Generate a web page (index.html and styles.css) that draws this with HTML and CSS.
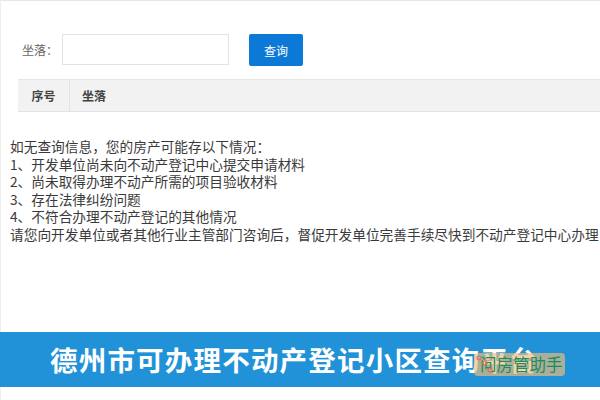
FILE: index.html
```html
<!DOCTYPE html>
<html lang="zh">
<head>
<meta charset="utf-8">
<title>德州市可办理不动产登记小区查询平台</title>
<link rel="stylesheet" href="styles.css">
</head>
<body>
<div class="page">
  <main class="content">
    <form class="search">
      <label class="search-label">坐落：</label>
      <span class="search-input"></span>
      <span class="search-btn">查询</span>
    </form>
    <div class="table-head">
      <div class="col col-no">序号</div>
      <div class="col col-addr">坐落</div>
    </div>
    <div class="notice">
      <p>如无查询信息，您的房产可能存以下情况：</p>
      <p>1、开发单位尚未向不动产登记中心提交申请材料</p>
      <p>2、尚未取得办理不动产所需的项目验收材料</p>
      <p>3、存在法律纠纷问题</p>
      <p>4、不符合办理不动产登记的其他情况</p>
      <p>请您向开发单位或者其他行业主管部门咨询后，督促开发单位完善手续尽快到不动产登记中心办理</p>
    </div>
  </main>
  <footer class="banner">
    <h1 class="banner-title">德州市可办理不动产登记小区查询平台</h1>
    <div class="watermark">
      <span class="wm-text">问房管助手</span>
      <svg class="wm-icon" width="22" height="22" viewBox="0 0 22 22" aria-hidden="true">
        <circle cx="5" cy="5" r="2"/>
        <circle cx="11" cy="10" r="2"/>
        <circle cx="16" cy="17" r="2"/>
      </svg>
    </div>
  </footer>
</div>
</body>
</html>
```
FILE: styles.css
```css
* { box-sizing: border-box; }
html, body { margin: 0; padding: 0; }
body {
  width: 600px;
  height: 400px;
  overflow: hidden;
  background: #fff;
  font-family: "Noto Sans CJK SC", "Liberation Sans", sans-serif;
}
p { margin: 0; }
.page {
  height: 400px;
  border-top: 1px solid #e6e6e6;
  border-left: 1px solid #eeeeee;
  display: flex;
  flex-direction: column;
}
.content { height: 331px; }
.search {
  display: flex;
  align-items: flex-start;
  height: 32px;
  margin-top: 33px;
  padding-left: 21px;
}
.search-label {
  width: 40px;
  font-size: 12px;
  line-height: 31px;
  color: #666;
}
.search-input {
  width: 167px;
  height: 31px;
  border: 1px solid #e3e3e3;
  background: #fff;
}
.search-btn {
  width: 54px;
  height: 32px;
  margin-left: 20px;
  background: #0c79d6;
  border-radius: 2px;
  color: #fff;
  font-size: 12px;
  display: flex;
  align-items: center;
  justify-content: center;
}
.table-head {
  display: flex;
  height: 33px;
  margin: 13px 0 0 17px;
  background: #f2f2f2;
  border-top: 1px solid #e6e6e6;
  border-bottom: 1px solid #e2e2e2;
  font-size: 12px;
  font-weight: 700;
  color: #444;
}
.col { display: flex; align-items: center; }
.col-no {
  width: 52px;
  justify-content: center;
  border-right: 1px solid #e2e2e2;
}
.col-addr { padding-left: 12px; }
.notice {
  margin-top: 26px;
  padding-left: 9px;
  font-size: 13.7px;
  line-height: 17.6px;
  color: #3a3a3a;
  white-space: nowrap;
}
.banner {
  position: relative;
  height: 55px;
  margin-left: -1px;
  background: #2192d8;
  display: flex;
  align-items: center;
}
.banner-title {
  margin: 0 0 0 50px;
  font-size: 27.5px;
  letter-spacing: 1.2px;
  line-height: 55px;
  font-weight: 700;
  color: #fff;
  white-space: nowrap;
}
.watermark {
  position: absolute;
  left: 474px;
  top: 21px;
  width: 91px;
  height: 23px;
  border-radius: 4px;
  background: rgba(237, 190, 125, 0.67);
  display: flex;
  align-items: center;
  padding-left: 6px;
}
.wm-icon {
  position: absolute;
  left: 0;
  top: 0;
  fill: none;
  stroke: #d9704f;
  stroke-width: 1.2;
}
.wm-text {
  font-size: 16.5px;
  line-height: 23px;
  color: #1f8a5c;
}
```
